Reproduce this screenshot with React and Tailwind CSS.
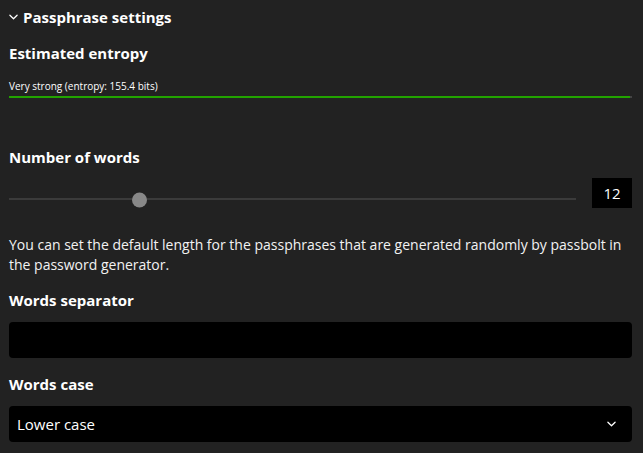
import React from 'react'

const font = { fontFamily: '"Open Sans", "Liberation Sans", sans-serif' }

const Chevron = ({ className }) => (
  <svg viewBox="0 0 10 6" className={className} fill="none" stroke="currentColor" strokeWidth="1.4" strokeLinecap="round" strokeLinejoin="round">
    <polyline points="1,1 5,5 9,1" />
  </svg>
)

export default function App() {
  const min = 4, max = 40, value = 12
  const pct = (value - min) / (max - min)

  return (
    <div style={font} className="w-[643px] h-[453px] bg-[#222222] text-white pl-[9px] pr-[11px] overflow-hidden">
      <div className="h-[34px] flex items-center gap-[5px]">
        <Chevron className="w-[9px] h-[6px] text-white" />
        <span className="text-[15px] font-bold leading-5">Passphrase settings</span>
      </div>

      <div className="mt-[9px] text-[15px] font-bold leading-5">Estimated entropy</div>
      <div className="mt-[16px] text-[10px] leading-[14px]">Very strong (entropy: 155.4 bits)</div>
      <div className="mt-[3px] h-[2px] bg-[#444444]">
        <div className="h-full w-[99.7%] bg-[#22a300]" />
      </div>

      <div className="mt-[49px] text-[15px] font-bold leading-5">Number of words</div>
      <div className="mt-[11px] flex items-center gap-4">
        <div className="relative flex-1 h-[30px] pt-[12px] flex items-center">
          <div className="w-full h-[2px] bg-[#3b3b3b]" />
          <div
            className="absolute top-[22px] -translate-y-1/2 w-[15px] h-[15px] rounded-full bg-[#888888]"
            style={{ left: `calc(${pct} * (100% - 15px))` }}
          />
        </div>
        <div className="w-[40px] h-[30px] bg-black flex items-center justify-center text-[15px]">{value}</div>
      </div>

      <p className="mt-[27px] text-[14px] leading-5 text-[#f2f2f2]">
        You can set the default length for the passphrases that are generated randomly by passbolt in the password generator.
      </p>

      <div className="mt-[15px] text-[15px] font-bold leading-5">Words separator</div>
      <div className="mt-[12px] h-[36px] bg-black rounded-[4px]" />

      <div className="mt-[16px] text-[15px] font-bold leading-5">Words case</div>
      <div className="mt-[12px] h-[36px] bg-black rounded-[4px] flex items-center justify-between pl-[8px] pr-[16px]">
        <span className="text-[15px]">Lower case</span>
        <Chevron className="w-[9px] h-[6px] text-white" />
      </div>
    </div>
  )
}
